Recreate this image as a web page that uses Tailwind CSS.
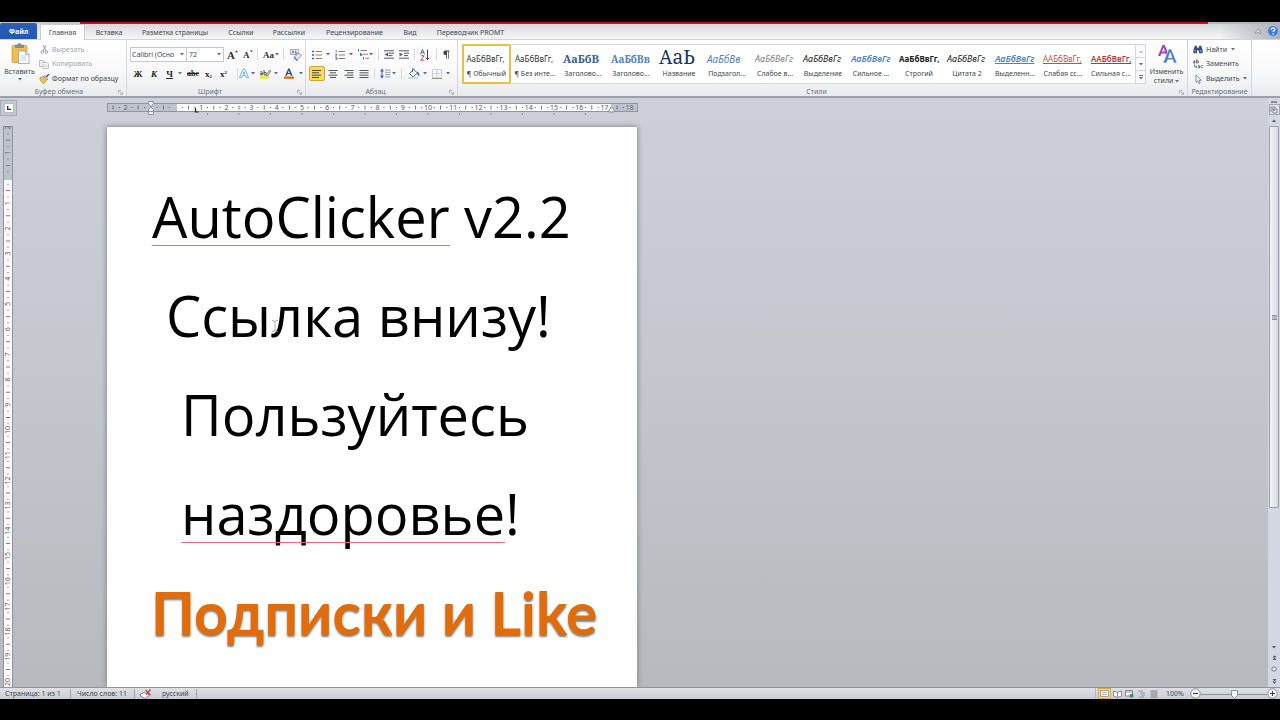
<!DOCTYPE html>
<html lang="ru">
<head>
<meta charset="utf-8">
<title>AutoClicker v2.2 — документ</title>
<script src="https://cdn.jsdelivr.net/npm/@tailwindcss/browser@4"></script>
</head>
<body class="bg-black">
<svg class="hidden">
  <symbol id="dd" viewBox="0 0 4 3"><path d="M0 0h4L2 2.6z" fill="#666b75"/></symbol>
  <symbol id="launch" viewBox="0 0 6 6"><path d="M.5 4V.5H4" fill="none" stroke="#8d929c" stroke-width=".8"/><path d="M2 2l2.5 2.5M5.3 2.6v2.7H2.6" fill="none" stroke="#8d929c" stroke-width=".8"/></symbol>
</svg>
<div class="flex h-screen flex-col overflow-hidden font-['Noto_Sans','Open_Sans',sans-serif] text-[7px] leading-[10px] text-[#44474e]">
  <div class="h-[22px] shrink-0 bg-black"></div>
  <div class="flex h-[2px] shrink-0 bg-[#b5b7bb]"><div class="w-[80px] bg-[#c9cacd]"></div><div class="mr-[72px] flex-1 bg-[#c01414]"></div></div>

  <!-- Tabs -->
  <nav class="flex h-[16px] shrink-0 items-end border-b border-[#cfd2d8] bg-linear-to-b from-[#d8d9dc] to-[#f7f7f8]">
    <button class="mr-[3px] h-[16px] w-[37px] rounded-t-[2px] bg-linear-to-b from-[#2a5fb8] to-[#2158b4] pt-[2px] font-bold text-white">Файл</button>
    <button class="-mb-px h-[16px] w-[45px] rounded-t-[2px] border border-b-0 border-[#c9ccd2] bg-white">Главная</button>
    <button class="h-[15px] w-[48px] pt-[2px]">Вставка</button>
    <button class="h-[15px] w-[84px] pt-[2px]">Разметка страницы</button>
    <button class="h-[15px] w-[48px] pt-[2px]">Ссылки</button>
    <button class="h-[15px] w-[48px] pt-[2px]">Рассылки</button>
    <button class="h-[15px] w-[83px] pt-[2px]">Рецензирование</button>
    <button class="h-[15px] w-[28px] pt-[2px]">Вид</button>
    <button class="h-[15px] w-[93px] pt-[2px]">Переводчик PROMT</button>
    <div class="ml-auto flex h-[16px] w-[60px] items-center justify-end gap-[5px] bg-linear-to-r from-transparent to-[#aeb0b4] pr-px">
      <button aria-label="Свернуть ленту"><svg class="h-[6px] w-[8px]" viewBox="0 0 8 6"><path d="M1 4.8L4 1.2l3 3.6-1 .6-2-1.6-2 1.6z" fill="#fff" stroke="#666" stroke-width=".7"/></svg></button>
      <button aria-label="Справка"><svg class="h-[12px] w-[12px]" viewBox="0 0 12 12"><circle cx="6" cy="6" r="5.4" fill="#3f7bd8" stroke="#b9cdf0" stroke-width=".6"/><path d="M4.3 4.7c0-2.4 3.5-2.3 3.5-.2 0 1.3-1.7 1.3-1.7 2.6" fill="none" stroke="#fff" stroke-width="1.3"/><circle cx="6.1" cy="8.9" r=".8" fill="#fff"/></svg></button>
    </div>
  </nav>

  <!-- Ribbon -->
  <div class="flex h-[58px] shrink-0 border-b-2 border-[#9a9fa8] bg-linear-to-b from-white via-[#fafafb] to-[#e9ebef]">
    <section class="flex w-[127px] flex-col border-r border-[#d4d7dc]">
      <div class="flex h-[48px] shrink-0 pt-[2px]">
        <button class="flex w-[39px] flex-col items-center justify-start pt-[1px]">
          <svg class="h-[21px] w-[20px]" viewBox="0 0 20 21"><rect x="2" y="2.5" width="15" height="17" rx="1" fill="#f0bf4e" stroke="#c89535" stroke-width=".7"/><path d="M5.500 4.500V2h2.300a1.700 1.500 0 013.400 0h2.300v2.500z" fill="#8b8f98" stroke="#5f646e" stroke-width=".5"/><path d="M8.500 8h7l3.500 3.500v9H8.500z" fill="#fff" stroke="#7f92b4" stroke-width=".7"/><path d="M15.500 8v3.500H19" fill="#d5e0f2" stroke="#7f92b4" stroke-width=".6"/><path d="M10.500 13h6M10.500 15h6M10.500 17h6" stroke="#a9bddb" stroke-width=".7"/></svg>
          <span class="mt-[3px] h-[10px]">Вставить</span>
          <svg class="mt-[1px] h-[3px] w-[4px]"><use href="#dd"/></svg>
        </button>
        <div class="flex flex-col">
          <button class="flex h-[15px] items-center gap-[3px] text-[#a3a6ad]"><svg class="h-[9px] w-[10px]" viewBox="0 0 10 9"><path d="M4 0l3 6M7 0L4 6" stroke="#8e929a" stroke-width=".9"/><circle cx="3.200" cy="7" r="1.300" fill="none" stroke="#8e929a" stroke-width=".8"/><circle cx="7.300" cy="7" r="1.300" fill="none" stroke="#8e929a" stroke-width=".8"/></svg>Вырезать</button>
          <button class="flex h-[14px] items-center gap-[3px] text-[#a3a6ad]"><svg class="h-[9px] w-[10px]" viewBox="0 0 10 9"><path d="M.5.500h4l1.500 1.500v4.500H.5z" fill="#f2f2f3" stroke="#a5a8ae" stroke-width=".7"/><path d="M4 2.500h4l1.500 1.500v4.500H4z" fill="#fff" stroke="#a5a8ae" stroke-width=".7"/><path d="M5 5h3.500M5 6.500h3.500" stroke="#b5b8be" stroke-width=".6"/></svg>Копировать</button>
          <button class="flex h-[15px] items-center gap-[2px]"><svg class="h-[10px] w-[11px]" viewBox="0 0 11 10"><path d="M1 3.500l4-1 3 3-3 4L3.500 9 1 6z" fill="#f1c14b" stroke="#a37d28" stroke-width=".6"/><path d="M4.500 2.500L6 1.500l3 3.500-1.300 1z" fill="#d9dde5" stroke="#5f6570" stroke-width=".5"/><path d="M7 3l3-2.700" stroke="#3b4f8b" stroke-width="1.500"/></svg>Формат по образцу</button>
        </div>
      </div>
      <div class="flex items-center leading-[8px] text-[#6b7079]"><span class="flex-1 text-center">Буфер обмена</span><svg class="mr-[3px] h-[5px] w-[5px]"><use href="#launch"/></svg></div>
    </section>

    <section class="flex w-[179px] flex-col border-r border-[#d4d7dc]">
      <div class="flex h-[48px] shrink-0 flex-col gap-[4px] pt-[7px] pl-[3px]">
        <div class="flex h-[15px] items-center">
          <div class="relative"><select aria-label="Шрифт" class="h-[15px] w-[57px] appearance-none border border-[#c5c8cf] bg-white pl-[1px]"><option>Calibri (Осно</option></select><svg class="pointer-events-none absolute top-[6px] right-[3px] h-[3px] w-[4px]"><use href="#dd"/></svg></div>
          <div class="relative"><select aria-label="Размер шрифта" class="h-[15px] w-[37px] appearance-none border border-l-0 border-[#c5c8cf] bg-white pl-[2px]"><option>72</option></select><svg class="pointer-events-none absolute top-[6px] right-[3px] h-[3px] w-[4px]"><use href="#dd"/></svg></div>
          <button class="ml-[3px] flex w-[12px] font-['Liberation_Serif',serif] text-[11px] font-bold text-[#333]">A<svg class="h-[3px] w-[3px]" viewBox="0 0 4 3"><path d="M0 2.600L2 0l2 2.600z" fill="#335"/></svg></button>
          <button class="ml-[4px] flex w-[10px] font-['Liberation_Serif',serif] text-[9px] font-bold text-[#333]">A<svg class="h-[3px] w-[3px]" viewBox="0 0 4 3"><path d="M0 0h4L2 2.600z" fill="#335"/></svg></button>
          <i class="ml-[4px] h-[11px] w-px bg-[#d5d8dd]"></i>
          <button class="ml-[5px] flex items-center gap-[1px] font-['Liberation_Serif',serif] text-[9px] font-bold text-[#333]">Aa<svg class="h-[3px] w-[4px]"><use href="#dd"/></svg></button>
          <i class="ml-[4px] h-[11px] w-px bg-[#d5d8dd]"></i>
          <button class="ml-[6px]" aria-label="Очистить формат"><svg class="h-[12px] w-[12px]" viewBox="0 0 12 12"><rect x=".5" y=".5" width="8" height="5" fill="#eef1f7" stroke="#7c869c" stroke-width=".6"/><path d="M2 4.500l1-3 1 3M5.500 1.500v3h1q1 0 .7-1-.3-.6-1.700-.5" stroke="#3f4963" stroke-width=".6" fill="none"/><path d="M4 8l5-4 2.500 2.500-4.500 5z" fill="#dfe3f1" stroke="#7881a8" stroke-width=".7"/><path d="M4 8l3 3.500" stroke="#6671a5" stroke-width="1.200"/></svg></button>
        </div>
        <div class="flex h-[15px] items-center font-['Liberation_Serif',serif] text-[9px] font-bold text-[#222]">
          <button class="w-[16px]">Ж</button>
          <button class="w-[16px] italic">К</button>
          <button class="w-[15px] underline">Ч</button>
          <svg class="mr-[4px] ml-[1px] h-[3px] w-[4px]"><use href="#dd"/></svg>
          <button class="w-[14px] text-[8px] line-through">abc</button>
          <button class="ml-[1px] w-[15px]">x<sub class="text-[5px]">2</sub></button>
          <button class="w-[15px]">x<sup class="text-[5px]">2</sup></button>
          <i class="ml-[6px] h-[11px] w-px bg-[#d5d8dd]"></i>
          <button aria-label="Эффекты текста"><svg class="h-[11px] w-[12px]" viewBox="0 0 12 11"><path d="M1.500 9.700L5.200 1h1.600l3.700 8.700H8.400L7.500 7.500h-3l-.9 2.200zM5.100 6h1.800L6 3.700z" fill="#fff" stroke="#79aee3" stroke-width="1"/></svg></button>
          <svg class="ml-[1px] h-[3px] w-[4px]"><use href="#dd"/></svg>
          <button class="ml-[4px]" aria-label="Цвет выделения"><svg class="h-[11px] w-[13px]" viewBox="0 0 13 11"><rect x="1" y="8" width="9" height="2.800" fill="#f3e54b"/><path d="M1.300 4q2-1 2 .5V7q-2.300.3-2.200-.8 0-1 2.200-1M5 2v5q2.500.3 2.500-1.500T5 4.500" fill="none" stroke="#333" stroke-width=".8"/><path d="M7 7.500L10.500 2 12 3 8.500 8z" fill="#c6ccd8" stroke="#555d6d" stroke-width=".6"/></svg></button>
          <svg class="ml-[2px] h-[3px] w-[4px]"><use href="#dd"/></svg>
          <button class="ml-[5px]" aria-label="Цвет текста"><svg class="h-[11px] w-[12px]" viewBox="0 0 12 11"><path d="M2.200 7.800L5.300.600h1.300l3 7.200H7.800l-.6-1.700H4.500l-.7 1.700zM4.900 4.900h1.900l-.9-2.600z" fill="#2e4a7e"/><rect x="1" y="8.500" width="10" height="2.300" fill="#e36c0a"/></svg></button>
          <svg class="ml-[4px] h-[3px] w-[4px]"><use href="#dd"/></svg>
        </div>
      </div>
      <div class="flex items-center leading-[8px] text-[#6b7079]"><span class="flex-1 pr-[4px] text-center">Шрифт</span><svg class="mr-[3px] h-[5px] w-[5px]"><use href="#launch"/></svg></div>
    </section>

    <section class="flex w-[152px] flex-col border-r border-[#d4d7dc]">
      <div class="flex h-[48px] shrink-0 flex-col gap-[4px] pt-[7px] pl-[3px]">
        <div class="flex h-[15px] items-center">
          <button class="ml-[3px]" aria-label="Маркеры"><svg class="h-[10px] w-[10px]" viewBox="0 0 10 10"><path d="M0 1.500h2M0 5h2M0 8.500h2" stroke="#3f5f9f" stroke-width="1.600"/><path d="M3.500 1.500H10M3.500 5H10M3.500 8.500H10" stroke="#777" stroke-width=".9"/></svg></button>
          <svg class="ml-[4px] h-[3px] w-[4px]"><use href="#dd"/></svg>
          <button class="ml-[5px]" aria-label="Нумерация"><svg class="h-[10px] w-[10px]" viewBox="0 0 10 10"><path d="M1.200 0v2.500M.4 4h1.300v1L.4 6h1.500M.4 7.500h1.400v2.300H.4M.8 8.600h1" stroke="#3f5f9f" stroke-width=".8" fill="none"/><path d="M3.500 1.500H10M3.500 5H10M3.500 8.500H10" stroke="#777" stroke-width=".9"/></svg></button>
          <svg class="ml-[4px] h-[3px] w-[4px]"><use href="#dd"/></svg>
          <button class="ml-[4px]" aria-label="Многоуровневый список"><svg class="h-[11px] w-[12px]" viewBox="0 0 12 11"><path d="M1.500 0v2.500M3.500 4v2.500h1.300V5H3.500M6.500 8v2.500" stroke="#3f5f9f" stroke-width=".9" fill="none"/><path d="M3.500 1.500H10M6 5.300h5M8.500 9.300H12" stroke="#777" stroke-width=".9"/></svg></button>
          <svg class="h-[3px] w-[4px]"><use href="#dd"/></svg>
          <i class="ml-[5px] h-[11px] w-px bg-[#d5d8dd]"></i>
          <button class="ml-[5px]" aria-label="Уменьшить отступ"><svg class="h-[9px] w-[10px]" viewBox="0 0 10 9"><path d="M0 .8h10M4.500 3.200H10M4.500 5.600h4M0 8.200h10" stroke="#444" stroke-width=".9"/><path d="M4 2.400v4L.5 4.400z" fill="#3f66b0"/></svg></button>
          <button class="ml-[5px]" aria-label="Увеличить отступ"><svg class="h-[9px] w-[10px]" viewBox="0 0 10 9"><path d="M0 .8h10M5 3.200h5M5 5.600h4M0 8.200h10" stroke="#444" stroke-width=".9"/><path d="M.5 2.400v4L4 4.400z" fill="#3f66b0"/></svg></button>
          <i class="ml-[5px] h-[11px] w-px bg-[#d5d8dd]"></i>
          <button class="ml-[5px]" aria-label="Сортировка"><svg class="h-[12px] w-[10px]" viewBox="0 0 10 12"><path d="M.4 5.300L2.500.500l2.100 4.800M1.200 3.600h2.600" stroke="#3f5f9f" stroke-width=".9" fill="none"/><path d="M.7 6.800h3.500L.7 11.200h3.700" stroke="#a4445b" stroke-width=".9" fill="none"/><path d="M7.500.500v10M5.800 8.700l1.700 2 1.700-2" stroke="#444" stroke-width="1" fill="none"/></svg></button>
          <i class="ml-[6px] h-[11px] w-px bg-[#d5d8dd]"></i>
          <button class="ml-[5px]" aria-label="Непечатаемые знаки"><svg class="h-[9px] w-[8px]" viewBox="0 0 8 9"><path d="M3.500 5a2.200 2.200 0 010-4.400H7.500v.8H6.700V8.700H6V1.400H5V8.700H4.200V5z" fill="#444"/></svg></button>
        </div>
        <div class="flex h-[15px] items-center">
          <button class="flex h-[15px] w-[16px] items-center justify-center rounded-[2px] border border-[#d9a33a] bg-[#fbd967]" aria-label="По левому краю"><svg class="h-[8px] w-[10px]" viewBox="0 0 10 8"><path d="M0 .5h9M0 2.800h7M0 5.200h9M0 7.500h7" stroke="#4b4a3f" stroke-width="1"/></svg></button>
          <button class="ml-[3px]" aria-label="По центру"><svg class="h-[8px] w-[10px]" viewBox="0 0 10 8"><path d="M.5.500h9M2 2.800h6M.5 5.200h9M2 7.500h6" stroke="#555" stroke-width="1"/></svg></button>
          <button class="ml-[6px]" aria-label="По правому краю"><svg class="h-[8px] w-[10px]" viewBox="0 0 10 8"><path d="M.5.500h9M3 2.800h6.500M.5 5.200h9M3 7.500h6.500" stroke="#555" stroke-width="1"/></svg></button>
          <button class="ml-[5px]" aria-label="По ширине"><svg class="h-[8px] w-[10px]" viewBox="0 0 10 8"><path d="M.5.500h9M.5 2.800h9M.5 5.200h9M.5 7.500h9" stroke="#555" stroke-width="1"/></svg></button>
          <i class="ml-[5px] h-[11px] w-px bg-[#d5d8dd]"></i>
          <button class="ml-[5px]" aria-label="Интервал"><svg class="h-[11px] w-[11px]" viewBox="0 0 11 11"><path d="M2 1v9" stroke="#3f66b0" stroke-width="1"/><path d="M0 3.500L2 .500l2 3zM0 7.500l2 3 2-3z" fill="#3f66b0"/><path d="M5 2h5.500M5 4.300h5.500M5 6.600h5.500M5 8.900h5.500" stroke="#888" stroke-width=".8"/></svg></button>
          <svg class="ml-[1px] h-[3px] w-[4px]"><use href="#dd"/></svg>
          <i class="ml-[5px] h-[11px] w-px bg-[#d5d8dd]"></i>
          <button class="ml-[6px]" aria-label="Заливка"><svg class="h-[11px] w-[12px]" viewBox="0 0 12 11"><path d="M1.500 5.500L5.500 1.500l4 3.500-4.500 4z" fill="#f3f6fb" stroke="#4a5d86" stroke-width=".9"/><path d="M4.500 4V.800h2" stroke="#4a5d86" stroke-width=".8" fill="none"/><path d="M9 3.500q3 1 2.200 5Q9.500 7.500 9 5z" fill="#3567b5"/><path d="M0 10h10" stroke="#c8cbd1" stroke-width="1.400"/></svg></button>
          <svg class="ml-[3px] h-[3px] w-[4px]"><use href="#dd"/></svg>
          <button class="ml-[5px]" aria-label="Границы"><svg class="h-[10px] w-[10px]" viewBox="0 0 10 10"><path d="M.5 8V.500h9V8M5 .500V8M.5 4.700h9" stroke="#9da3ad" stroke-width=".8" stroke-dasharray="1 .7" fill="none"/><path d="M0 9.300h10" stroke="#777" stroke-width="1"/></svg></button>
          <svg class="ml-[4px] h-[3px] w-[4px]"><use href="#dd"/></svg>
        </div>
      </div>
      <div class="flex items-center leading-[8px] text-[#6b7079]"><span class="flex-1 pr-[4px] text-center">Абзац</span><svg class="mr-[3px] h-[5px] w-[5px]"><use href="#launch"/></svg></div>
    </section>

    <section class="flex min-w-0 flex-1 flex-col border-r border-[#d4d7dc]">
      <div class="flex h-[48px] shrink-0 pt-[4px] pl-[4px]">
        <div class="flex h-[40px] min-w-0 flex-1 border border-[#d3d6db] bg-white text-[7px]">
          <button class="-my-px -ml-px flex w-[49px] shrink-0 flex-col items-center rounded-[2px] border-2 border-[#e9bf4a] bg-white whitespace-nowrap"><span class="flex h-[22px] w-[40px] items-end pb-[4px] text-[8px] text-[#333]">АаБбВвГг,</span><span class="mt-px">¶ Обычный</span></button>
          <div id="gallery" class="flex min-w-0 flex-1"></div>
        </div>
        <div class="flex h-[40px] w-[10px] flex-col border border-l-0 border-[#d3d6db] bg-[#fafafb]">
          <button class="flex flex-1 items-center justify-center border-b border-[#d3d6db]" aria-label="Вверх"><svg class="h-[3px] w-[4px] rotate-180 opacity-40"><use href="#dd"/></svg></button>
          <button class="flex flex-1 items-center justify-center border-b border-[#d3d6db]" aria-label="Вниз"><svg class="h-[3px] w-[4px]"><use href="#dd"/></svg></button>
          <button class="flex flex-1 flex-col items-center justify-center gap-px" aria-label="Все стили"><i class="h-px w-[4px] bg-[#666b75]"></i><svg class="h-[3px] w-[4px]"><use href="#dd"/></svg></button>
        </div>
        <button class="flex w-[41px] flex-col items-center justify-start">
          <svg class="h-[20px] w-[20px]" viewBox="0 0 20 20"><path d="M1 12L5.500 1h2.200l4.500 11H9.500L8.600 9.500H4.300L3.400 12zM5 7.500h3L6.500 3.500z" fill="#a843b4"/><path d="M6 19L11.800 5h2.400L20 19h-3l-1.200-3.200h-5.200L9.400 19zm5.300-5.200h3.800L13.200 8.500z" fill="#4a7ccb" stroke="#fff" stroke-width=".5"/></svg>
          <span class="mt-[3px] leading-[9px]">Изменить<br>стили <svg class="inline h-[3px] w-[4px]"><use href="#dd"/></svg></span>
        </button>
      </div>
      <div class="flex items-center leading-[8px] text-[#6b7079]"><span class="flex-1 pr-[4px] text-center">Стили</span><svg class="mr-[3px] h-[5px] w-[5px]"><use href="#launch"/></svg></div>
    </section>

    <section class="flex w-[64px] flex-col border-r border-[#d4d7dc]">
      <div class="flex h-[48px] shrink-0 flex-col pt-[2px] pl-[5px]">
        <button class="flex h-[15px] items-center gap-[3px]"><svg class="h-[9px] w-[10px]" viewBox="0 0 10 9"><path d="M.3 5.500L1.800.800h2L4.500 3h1L6.200.800h2l1.500 4.700v2.800H6V5.500H4v2.800H.3z" fill="#34508f"/><path d="M1.500 6h1.500M7 6h1.500" stroke="#b6c9ee" stroke-width="1"/></svg>Найти<svg class="ml-[1px] h-[3px] w-[4px]"><use href="#dd"/></svg></button>
        <button class="flex h-[14px] items-center gap-[3px]"><svg class="h-[10px] w-[10px]" viewBox="0 0 10 10"><path d="M.5 2q1.500-.7 1.500.5V4Q.4 4.500.4 3.500q0-.8 1.600-.8M3.700.300V4q2 .2 2-1.200t-2-1" stroke="#444" stroke-width=".8" fill="none"/><path d="M1.500 5.500v2.300h2M2.800 6.500l1 1.300-1 1.200" stroke="#3f66b0" stroke-width=".8" fill="none"/><path d="M5 6.500q1.500-.7 1.500.5v2Q5 9.300 5 8.300q0-.6 1.500-.7M9.800 6.500q-1.900-.5-1.900 1.100t1.900 1.300" stroke="#3a8a4a" stroke-width=".9" fill="none"/></svg>Заменить</button>
        <button class="flex h-[15px] items-center gap-[3px]"><svg class="h-[10px] w-[10px]" viewBox="0 0 10 10"><path d="M3 .800v7.500l1.700-1.500L6 9.600l1.200-.6L6 6.300h2.300z" fill="#fff" stroke="#5a76ac" stroke-width=".8"/></svg>Выделить<svg class="h-[3px] w-[4px]"><use href="#dd"/></svg></button>
      </div>
      <div class="text-center leading-[8px] text-[#6b7079]">Редактирование</div>
    </section>
    <div class="w-[28px]"></div>
  </div>

  <!-- Workspace -->
  <main class="flex min-h-0 flex-1 bg-linear-to-b from-[#cdd0d9] via-[#c3c6cd] to-[#b6b9bd]">
    <div class="flex w-[17px] shrink-0 flex-col">
      <button class="mt-[2px] flex h-[16px] w-[17px] items-center justify-center border border-[#a6aab3] bg-[#c5c8d0]" aria-label="Табуляция"><span class="flex h-[10px] w-[10px] items-center justify-center border border-[#b9bdc6] bg-white"><svg class="h-[4px] w-[4px]" viewBox="0 0 4 4"><path d="M.7 0v3.300H4" fill="none" stroke="#333" stroke-width="1.300"/></svg></span></button>
      <svg id="vruler" class="mt-[10px] min-h-0 w-[17px] flex-1" font-family="Noto Sans" font-size="7" fill="#5d626c"></svg>
    </div>
    <div class="flex min-w-0 flex-1 flex-col overflow-hidden pl-[90px]">
      <svg id="hruler" class="h-[29px] w-[531px] shrink-0" font-family="Noto Sans" font-size="7" fill="#5d626c"></svg>
      <article class="relative w-[530px] flex-1 bg-white pt-[40px] font-['Open_Sans','Noto_Sans',sans-serif] text-[56px] leading-[99px] whitespace-nowrap text-black shadow-[0_0_5px_1px_#8a8d93]">
        <p class="h-[99px] pl-[45px]"><span class="relative">AutoClicker<i class="absolute bottom-[8px] left-0 h-px w-full bg-[#e07078]"></i></span> v2.2</p>
        <p class="h-[99px] pl-[59px]">Ссылка внизу!</p>
        <p class="h-[99px] pl-[74px]">Пользуйтесь</p>
        <p class="h-[99px] pl-[74px]"><span class="relative">наздоровье<i class="absolute bottom-[8px] left-0 h-px w-full bg-[#e07078]"></i></span>!</p>
        <p class="h-[99px] pl-[44px] font-['Lato','Open_Sans',sans-serif] text-[59px] font-bold text-[#e36c0a] [text-shadow:0_2px_2px_#00000080]">Подписки и Like</p>
        <svg class="absolute top-[193px] left-[165px] h-[12px] w-[6px]" viewBox="0 0 6 12"><path d="M0 .500q3 0 3 1.500v8q0 1.500-3 1.500M6 .500q-3 0-3 1.500M6 11.500q-3 0-3-1.500" fill="none" stroke="#999" stroke-width=".8"/></svg>
      </article>
    </div>
    <aside class="flex w-[12px] shrink-0 flex-col items-center bg-[#d3d7df]">
      <i class="mt-[3px] h-[2px] w-[6px] bg-[#868b96]"></i>
      <button class="mt-[1px] flex h-[11px] w-[11px] items-center justify-center border border-[#a0a5af] bg-[#dfe2e9]" aria-label="Линейка"><svg class="h-[8px] w-[8px]" viewBox="0 0 8 8"><path d="M1 6V1h4v1.500M3 3h4v4H3zM2 2l3 3" fill="none" stroke="#6c727e" stroke-width=".8"/></svg></button>
      <svg class="mt-[4px] mb-[4px] h-[3px] w-[6px] rotate-180" viewBox="0 0 4 3"><path d="M0 0h4L2 2.600z" fill="#50555f"/></svg>
      <div class="flex w-[10px] flex-[381] items-center justify-center rounded-[1px] border border-[#979ca6] bg-linear-to-r from-[#f3f5f9] to-[#d5dae3]"><i class="h-[5px] w-[5px] border-y border-[#8b909b] bg-[#b5b9c2]"></i></div>
      <div class="flex-[135]"></div>
      <div class="flex h-[44px] flex-col items-center justify-between py-[3px]">
        <svg class="h-[3px] w-[6px]" viewBox="0 0 4 3"><path d="M0 0h4L2 2.600z" fill="#50555f"/></svg>
        <svg class="h-[6px] w-[5px]" viewBox="0 0 5 6"><path d="M.5 2.500L2.500.300l2 2.200zM.5 5L2.500 2.800l2 2.200z" fill="#50555f"/></svg>
        <svg class="h-[6px] w-[6px]" viewBox="0 0 6 6"><circle cx="3" cy="3" r="2.200" fill="#e9ecf1" stroke="#686d78" stroke-width=".9"/></svg>
        <svg class="h-[6px] w-[5px]" viewBox="0 0 5 6"><path d="M.5 1L2.500 3.200l2-2.200zM.5 3.500l2 2.200 2-2.200z" fill="#50555f"/></svg>
      </div>
    </aside>
  </main>

  <!-- Status bar -->
  <footer class="flex h-[12px] shrink-0 items-center border-t border-[#8f939b] bg-linear-to-b from-[#dfe1e6] to-[#c9ccd3]">
    <span class="w-[71px] border-r border-[#9ea2ab] pl-[5px]">Страница: 1 из 1</span>
    <span class="w-[64px] border-r border-[#9ea2ab] pl-[6px]">Число слов: 11</span>
    <svg class="mx-[5px] h-[10px] w-[12px]" viewBox="0 0 12 10"><path d="M.5 5l4-1.500 5 2.500-4.500 3.500L.5 7z" fill="#fff" stroke="#4e6ba6" stroke-width=".8"/><path d="M5.500 1l5 5M10.500.500l-4.500 5" stroke="#d9432f" stroke-width="1.300"/></svg>
    <span class="w-[40px] border-r border-[#9ea2ab] pl-[5px]">русский</span>
    <div class="ml-auto flex h-full items-center">
      <i class="h-full w-px bg-[#b2b6be]"></i>
      <button class="ml-[2px] flex h-[11px] w-[13px] items-center justify-center border border-[#dca83d] bg-[#fbe08a]" aria-label="Разметка"><svg class="h-[7px] w-[9px]" viewBox="0 0 9 7"><rect x=".5" y=".5" width="8" height="6" fill="#fff" stroke="#8a8d94" stroke-width=".8"/><path d="M2 2.500h5M2 4.500h5" stroke="#8a8d94" stroke-width=".7"/></svg></button>
      <button class="ml-[2px]" aria-label="Чтение"><svg class="h-[8px] w-[9px]" viewBox="0 0 9 8"><path d="M.5 1L4.500 2.500 8.500 1v5L4.500 7.500.5 6zM4.500 2.500v5" fill="#fff" stroke="#6f747f" stroke-width=".8"/></svg></button>
      <button class="ml-[3px]" aria-label="Веб"><svg class="h-[8px] w-[9px]" viewBox="0 0 9 8"><path d="M.5.500h7v5.500h-7zM.5 2h7" fill="#fff" stroke="#6f747f" stroke-width=".8"/><circle cx="6.500" cy="5.800" r="2" fill="#3f8c7a"/></svg></button>
      <button class="ml-[4px]" aria-label="Структура"><svg class="h-[8px] w-[8px]" viewBox="0 0 8 8"><path d="M0 1h5M2 3h5M3 5h4M1 7h5" stroke="#8b8f98" stroke-width=".9"/></svg></button>
      <button class="ml-[4px]" aria-label="Черновик"><svg class="h-[8px] w-[8px]" viewBox="0 0 8 8"><path d="M.5 1h7M.5 3h7M.5 5h7M.5 7h7" stroke="#777c86" stroke-width="1"/></svg></button>
      <span class="ml-[8px] w-[22px]">100%</span>
      <button class="ml-[2px]" aria-label="Уменьшить"><svg class="h-[11px] w-[11px]" viewBox="0 0 11 11"><circle cx="5.500" cy="5.500" r="4.700" fill="#f6f7f9" stroke="#70757f" stroke-width=".8"/><path d="M3 5.500h5" stroke="#444" stroke-width="1.200"/></svg></button>
      <div class="relative h-[10px] w-[66px]"><i class="absolute top-[5px] left-0 h-px w-full bg-[#8e929b]"></i><input type="range" aria-label="Масштаб" value="50" class="absolute inset-0 w-full opacity-0"><svg class="pointer-events-none absolute top-[1px] left-[30px] h-[9px] w-[7px]" viewBox="0 0 7 9"><path d="M.6.600h5.800v5L3.500 8.400.6 5.600z" fill="#fafbfc" stroke="#70757f" stroke-width=".8"/></svg></div>
      <button class="mr-[2px]" aria-label="Увеличить"><svg class="h-[11px] w-[11px]" viewBox="0 0 11 11"><circle cx="5.500" cy="5.500" r="4.700" fill="#f6f7f9" stroke="#70757f" stroke-width=".8"/><path d="M3 5.500h5M5.500 3v5" stroke="#444" stroke-width="1.200"/></svg></button>
    </div>
  </footer>
  <div class="h-[21px] shrink-0 bg-black"></div>
</div>
<script>
const styles = [
  ['АаБбВвГг,', '¶ Без инте...', 'text-[8px] text-[#333]'],
  ['АаБбВ', 'Заголово...', "font-['Noto_Serif','DejaVu_Serif',serif] text-[11px] font-bold text-[#365f91]"],
  ['АаБбВв', 'Заголово...', "font-['Noto_Serif','DejaVu_Serif',serif] text-[10px] font-bold text-[#4f81bd]"],
  ['АаЬ', 'Название', "font-['Noto_Serif','DejaVu_Serif',serif] text-[19px] leading-[14px] text-[#17365d]"],
  ['АаБбВв', 'Подзагол...', 'text-[10px] italic text-[#4f81bd]'],
  ['АаБбВвГг', 'Слабое в...', 'text-[9px] italic text-[#808080]'],
  ['АаБбВвГг', 'Выделение', 'text-[9px] italic text-[#222]'],
  ['АаБбВвГг', 'Сильное ...', 'text-[9px] italic font-semibold text-[#4f81bd]'],
  ['АаБбВвГг,', 'Строгий', 'text-[8px] font-bold text-[#222]'],
  ['АаБбВвГг', 'Цитата 2', 'text-[9px] italic text-[#222]'],
  ['АаБбВвГг', 'Выделенн...', 'text-[9px] italic font-semibold text-[#4f81bd] underline'],
  ['ААБбВвГг,', 'Слабая сс...', 'text-[8px] text-[#c0504d] underline'],
  ['ААБбВвГг,', 'Сильная с...', 'text-[8px] font-semibold text-[#c0302d] underline']
];
document.getElementById('gallery').innerHTML = styles.map(([p, n, c]) =>
  `<button class="flex w-[48px] shrink-0 flex-col items-center pt-px whitespace-nowrap"><span class="flex h-[22px] w-[40px] items-end pb-[4px] ${c}">${p}</span><span class="mt-px">${n}</span></button>`).join('');

const CM = 25.2;
function marks(zero, from, to, draw) {
  let s = '';
  for (let q = Math.ceil((from - zero) / CM * 4); q <= (to - zero) / CM * 4; q++) {
    const p = zero + q * CM / 4;
    if (p < from + 3 || p > to - 3 || q === 0) continue;
    s += draw(p, q);
  }
  return s;
}
document.getElementById('hruler').innerHTML =
  `<rect x="0.5" y="5.500" width="530" height="8" fill="#bfc3cb" stroke="#8f949e"/><rect x="70" y="6" width="434" height="7" fill="#fbfbfc"/>` +
  marks(69, 0, 530, (p, q) => q % 4 === 0
    ? (q === -4 ? '' : `<text x="${p}" y="12" text-anchor="middle">${Math.abs(q / 4)}</text>`)
    : q % 2 === 0 ? `<rect x="${p - .4}" y="7.500" width="0.8" height="4"/>` : `<rect x="${p - .5}" y="9" width="1" height="1"/>`) +
  `<path d="M41.500 3.500h5v2l-2.500 3.500-2.500-3.500zM41.500 16.500h5v-5l-2.500-2.500-2.500 2.500zM41.500 13.500h5" fill="#eceef2" stroke="#7b808a" stroke-width=".8"/>` +
  `<path d="M502 14v-2l2.500-3 2.500 3v2z" fill="#eceef2" stroke="#7b808a" stroke-width=".8"/><path d="M88.500 10v4h3" fill="none" stroke="#222" stroke-width="1.200"/>` +
  Array.from({length: 13}, (_, i) => `<rect x="${100 + i * 31.500}" y="15" width="1" height="2" fill="#8a8f99"/>`).join('');
document.getElementById('vruler').innerHTML =
  `<rect x="3.500" y="0.500" width="9" height="570" fill="#fbfbfc" stroke="#8f949e"/><rect x="4" y="1" width="8" height="53" fill="#bfc3cb"/>` +
  marks(52, -2, 562, (p, q) => q % 4 === 0
    ? `<text transform="translate(10 ${p}) rotate(-90)" text-anchor="middle">${Math.abs(q / 4)}</text>`
    : q % 2 === 0 ? `<rect x="6" y="${p - .4}" width="4" height="0.800"/>` : `<rect x="7.500" y="${p - .5}" width="1" height="1"/>`);
</script>
</body>
</html>
